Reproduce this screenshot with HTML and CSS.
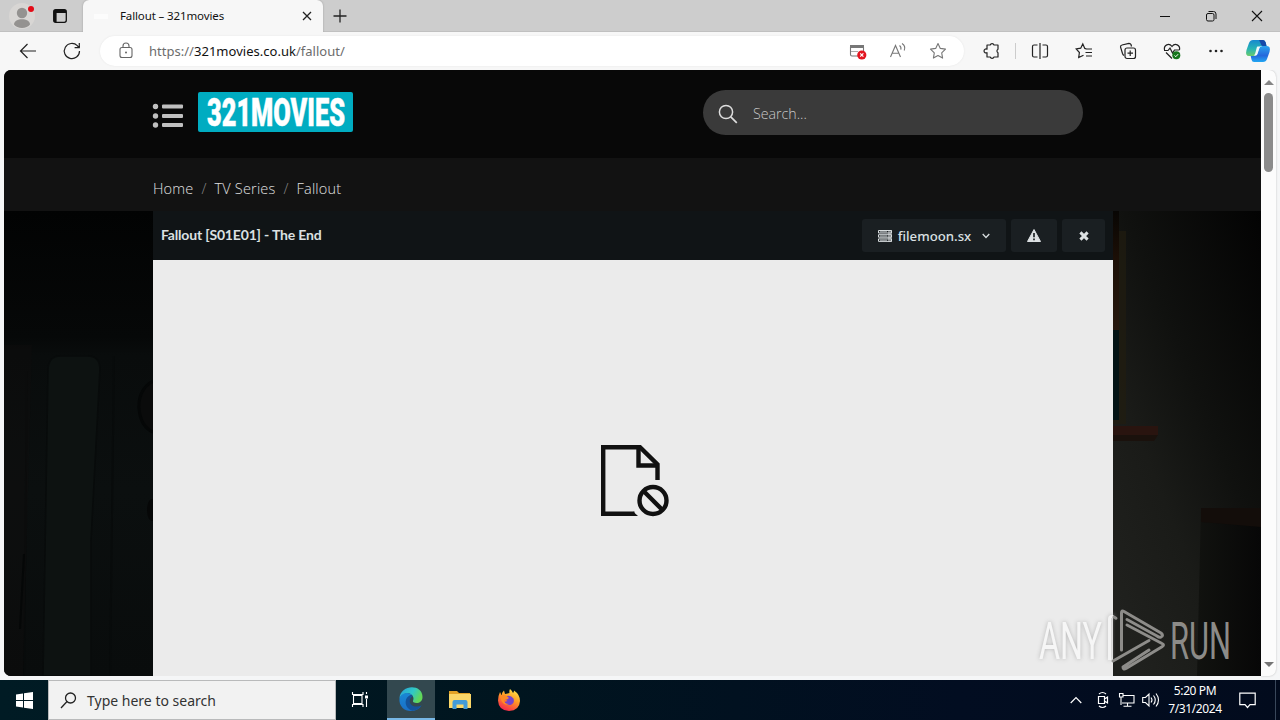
FILE: index.html
```html
<!DOCTYPE html>
<html lang="en">
<head>
<meta charset="utf-8">
<title>Fallout – 321movies</title>
<link rel="stylesheet" href="styles.css">
</head>
<body>
<div class="desktop">
  <div class="tabstrip">
    <div class="tab-tools">
      <svg class="avatar" width="28" height="28" viewBox="0 0 28 28"><circle cx="14" cy="14" r="13" fill="#d8d6d4"/><circle cx="14" cy="11" r="5.2" fill="#949290"/><path d="M6 22.500c0-7 16-7 16 0c-3 4.500-13 4.500-16 0z" fill="#949290"/><circle cx="23" cy="7" r="3" fill="#e30b17"/></svg>
      <svg class="ws" width="16" height="16" viewBox="0 0 16 16"><rect x="1.700" y="1.700" width="12.600" height="12.600" rx="2" fill="none" stroke="#111" stroke-width="1.300"/><path d="M2 2h12v3H2zM2 5h2.600v9H2z" fill="#111"/></svg>
    </div>
    <div class="tab">
      <span class="favicon"></span>
      <span class="tab-title">Fallout – 321movies</span>
      <svg width="12" height="12" viewBox="0 0 12 12"><path d="M2 2l8 8M10 2l-8 8" stroke="#222" stroke-width="1.300"/></svg>
    </div>
    <svg class="plus" width="16" height="16" viewBox="0 0 16 16"><path d="M8 1.500v13M1.500 8h13" stroke="#222" stroke-width="1.300"/></svg>
    <div class="winbtns">
      <svg width="12" height="12" viewBox="0 0 12 12"><path d="M1 6.500h10" stroke="#111"/></svg>
      <svg width="12" height="12" viewBox="0 0 12 12"><rect x="1.500" y="3.500" width="7.500" height="7.500" rx="1.500" fill="none" stroke="#111"/><path d="M3.500 1.500h5q2.500 0 2.500 2.500v5" fill="none" stroke="#111"/></svg>
      <svg width="12" height="12" viewBox="0 0 12 12"><path d="M1 1l10 10M11 1L1 11" stroke="#111" stroke-width="1.100"/></svg>
    </div>
  </div>

  <div class="toolbar">
    <svg class="back" width="18" height="18" viewBox="0 0 18 18"><path d="M17 9H1.500M8.500 2L1.500 9l7 7" fill="none" stroke="#222" stroke-width="1.200"/></svg>
    <svg class="reload" width="18" height="18" viewBox="0 0 18 18"><path d="M16.500 9a7.600 7.600 0 1 1-2.200-5.300L16 5.500M16.300 1v4.700h-4.700" fill="none" stroke="#222" stroke-width="1.200"/></svg>
    <div class="omnibox">
      <svg width="14" height="18" viewBox="0 0 14 18"><rect x="1" y="5.500" width="12" height="10" rx="2" fill="none" stroke="#666" stroke-width="1.100"/><path d="M4 5.500V4a3 3 0 0 1 6 0v1.500" fill="none" stroke="#666" stroke-width="1.100"/><circle cx="7" cy="10.500" r="1" fill="#666"/></svg>
      <div class="url">https://<b>321movies.co.uk</b>/fallout/</div>
      <svg class="block" width="18" height="18" viewBox="0 0 18 18"><rect x="1.500" y="3.500" width="13" height="10.500" rx="1.500" fill="none" stroke="#777" stroke-width="1.100"/><path d="M1 3h14v3H1z" fill="#777"/><path d="M2 9.500h7" stroke="#aaa"/><circle cx="12.800" cy="13" r="4.600" fill="#e3141f"/><path d="M11.200 11.400l3.200 3.200M14.400 11.400l-3.200 3.200" stroke="#fff" stroke-width="1.200"/></svg>
      <svg class="read" width="18" height="18" viewBox="0 0 18 18"><path d="M1.500 15L6.500 3.500L11.500 15M3.200 11.200h6.600M10.500 3.500q2 1.500 1.300 4.200M13 1.500q4 2.500 2.200 7" fill="none" stroke="#777" stroke-width="1.100"/></svg>
      <svg class="fav" width="18" height="18" viewBox="0 0 18 18"><path d="M9 1.500l2.300 4.900 5.200.7-3.800 3.700.9 5.300L9 13.600l-4.600 2.500.9-5.300L1.500 7.100l5.200-.7z" fill="none" stroke="#777" stroke-width="1.100" stroke-linejoin="round"/></svg>
    </div>
    <div class="actions">
      <svg width="18" height="18" viewBox="0 0 18 18"><path d="M4 3h3.200a2 2 0 0 1 3.800 0h4v4.300a1.900 1.900 0 0 0 0 3.400V15h-4a2 2 0 0 1-3.800 0H4v-4.300a2 2 0 1 1 0-3.500z" fill="none" stroke="#222" stroke-width="1.200" stroke-linejoin="round"/></svg>
      <i class="sep"></i>
      <svg width="18" height="18" viewBox="0 0 18 18"><path d="M6.500 3H3q-1.500 0-1.500 1.500v9Q1.500 15 3 15h3.500M11.500 3H15q1.500 0 1.500 1.500v9q0 1.500-1.500 1.500h-3.500M9 1v16" fill="none" stroke="#222" stroke-width="1.200"/></svg>
      <svg width="18" height="18" viewBox="0 0 18 18"><path d="M11.500 7L9.800 6.400 7.800 2 5.700 6.200 1.200 7l3.200 3.500-.7 5 4.800-2.300M11 7h6M10.500 10.500H17M11 14h6" fill="none" stroke="#222" stroke-width="1.200"/></svg>
      <svg width="18" height="18" viewBox="0 0 18 18"><rect x="6" y="6" width="10.500" height="10.500" rx="2" fill="none" stroke="#222" stroke-width="1.200"/><path d="M11.200 8.500v5.500M8.500 11.200H14M5 13.500q-1-.5-1.500-2L1.500 5q0-1.800 1.500-2l7-1.700q1.500 0 2 1.200L12.500 4.500" fill="none" stroke="#222" stroke-width="1.200"/></svg>
      <svg width="18" height="18" viewBox="0 0 18 18"><path d="M1.500 8C.5 3 6 .5 9 4.500C12 .5 17.500 3 16.500 8M3 10.500l6 6M1 8.500h4L7 6l2.500 5 2-3h5" fill="none" stroke="#222" stroke-width="1.200"/><circle cx="13.300" cy="13.300" r="4" fill="#16761c"/><path d="M11.500 13.500l1.300 1.200 2.300-2.500" fill="none" stroke="#fff"/></svg>
      <svg width="18" height="18" viewBox="0 0 18 18"><g fill="#222"><circle cx="3.500" cy="9" r="1.300"/><circle cx="9" cy="9" r="1.300"/><circle cx="14.500" cy="9" r="1.300"/></g></svg>
      <svg class="copilot" width="26" height="26" viewBox="0 0 26 26"><defs><linearGradient id="c1" x1="0" y1="0" x2="0" y2="1"><stop offset="0" stop-color="#1788cf"/><stop offset=".55" stop-color="#27b4b5"/><stop offset="1" stop-color="#6acb6b"/></linearGradient><linearGradient id="c2" x1="0" y1="0" x2="0" y2="1"><stop offset="0" stop-color="#2ba3ee"/><stop offset=".6" stop-color="#2468dc"/><stop offset="1" stop-color="#22a7f2"/></linearGradient></defs><path d="M8 2h10q2 0 2.700 2.500L21.500 8h-5q-2 0-2.700 2.500L12 16q-.8 2-3 2H4Q0 18 1.500 12L4 5Q5.200 2 8 2z" fill="url(#c1)"/><path d="M17.500 8H22q4 0 2.500 6L22 21q-1 3-4 3H9q-2 0-2.500-2.500L5.700 18H9q2.200 0 3-2l2-5.500q.8-2.500 3.500-2.500z" fill="url(#c2)"/><path d="M14 2h4q2 0 2.700 2.500L21.500 8h-4q-1.500-.5-2-3z" fill="#174aa9"/><path d="M12.500 8.500h3.500q-1 0-1.700 2L12.500 16q-.6 1.500-2 1.500H8.500q1.200-.3 1.700-2l1.300-5q.4-2 1-2z" fill="#f1f9fb"/></svg>
    </div>
  </div>

  <div class="window">
    <div class="page">
      <header class="site-head">
        <svg class="menu" width="32" height="26" viewBox="0 0 32 26"><g fill="#bfbfbf"><circle cx="3.500" cy="3.500" r="2.700"/><circle cx="3.500" cy="13" r="2.700"/><circle cx="3.500" cy="22" r="2.700"/><rect x="10" y="1.500" width="21" height="4" rx="1"/><rect x="10" y="11" width="21" height="4" rx="1"/><rect x="10" y="20" width="21" height="4" rx="1"/></g></svg>
        <div class="logo"><svg width="155" height="40" viewBox="0 0 155 40"><text class="logo-text" x="9" y="34" textLength="138" lengthAdjust="spacingAndGlyphs">321MOVIES</text></svg></div>
        <div class="search">
          <svg width="20" height="20" viewBox="0 0 20 20"><circle cx="8" cy="8" r="6.600" fill="none" stroke="#ddd" stroke-width="1.500"/><path d="M12.800 12.800l6 6" stroke="#ddd" stroke-width="1.700"/></svg>
          <span>Search...</span>
        </div>
      </header>
      <nav class="crumbs"><a>Home</a><i>/</i><a>TV Series</a><i>/</i><a>Fallout</a></nav>
      <main class="stage">
        <svg class="scene" width="149" height="465" viewBox="0 0 149 465"><defs><linearGradient id="l1" x1="0" y1="0" x2="0" y2="1"><stop offset="0" stop-color="#020303"/><stop offset=".27" stop-color="#060808"/><stop offset=".31" stop-color="#090c0c"/><stop offset=".6" stop-color="#0b0f0f"/><stop offset="1" stop-color="#090c0c"/></linearGradient></defs><path fill="url(#l1)" d="M0 0h149v465H0z"/><path d="M39 465l5-307q1-13 12-13h28q11 0 12 12l-9 173v135z" fill="#0d1211" stroke="#080b0b" stroke-width="1.500"/><path d="M110 145l-4 320M23 160l-3 305" fill="none" stroke="#080b0b" stroke-width="2"/><path d="M0 134h28l-9 331H0z" fill="#100d0e" opacity=".35"/><path d="M149 170q-15 8-14 28 2 18 14 23" fill="#0a0b0b" stroke="#050707" stroke-width="3"/><ellipse cx="148" cy="299" rx="5" ry="11" fill="#060707"/><path d="M20 343l-4 75" stroke="#050707" stroke-width="2"/></svg>
        <section class="player">
          <div class="player-head">
            <h1>Fallout [S01E01] - The End</h1>
            <div class="btn server"><svg width="14" height="12" viewBox="0 0 14 12"><path d="M.5.500h13v2.500H.5zM.5 4.700h13v2.500H.5zM.5 8.900h13v2.500H.5z" fill="none" stroke="#d7dcde"/><path d="M2 1.800h7M2 6h7M2 10.200h7" stroke="#d7dcde" stroke-width=".8"/><path d="M10 0h4v12h-4z" fill="#d7dcde" opacity=".5"/></svg><span>filemoon.sx</span><svg width="8" height="6" viewBox="0 0 8 6"><path d="M.7 1L4 4.500 7.300 1" fill="none" stroke="#d7dcde" stroke-width="1.300"/></svg></div>
            <div class="btn warn"><svg width="14" height="13" viewBox="0 0 14 13"><path d="M7 .5L13.500 12.500H.5z" fill="#dce0e2" stroke="#dce0e2" stroke-linejoin="round"/><path d="M7 4v4.200M7 9.500v1.700" stroke="#1c2124" stroke-width="1.700"/></svg></div>
            <div class="btn close"><svg width="10" height="10" viewBox="0 0 10 10"><path d="M1.400 1.400l7.200 7.200M8.600 1.400L1.400 8.600" stroke="#dce0e2" stroke-width="3"/></svg></div>
          </div>
          <div class="blocked"><svg width="70" height="74" viewBox="0 0 70 74"><path d="M57.500 36V20.500L40 3.200H3.200v66.600h31.300" fill="none" stroke="#111" stroke-width="4.400"/><path d="M38.500 3v18.500H58" fill="none" stroke="#111" stroke-width="4.400"/><path d="M33 67.600l5 4.400h-5z" fill="#111"/><circle cx="53" cy="56.500" r="13.500" fill="none" stroke="#111" stroke-width="4.400"/><path d="M43.500 47l19 19" stroke="#111" stroke-width="4.400"/></svg></div>
        </section>
        <svg class="scene" width="148" height="465" viewBox="0 0 148 465"><defs><linearGradient id="r1" x1="1" y1="0" x2=".2" y2="1"><stop offset="0" stop-color="#030303"/><stop offset=".45" stop-color="#10110f"/><stop offset=".7" stop-color="#1a1b18"/><stop offset="1" stop-color="#20211e"/></linearGradient><linearGradient id="r2" x1="0" y1="0" x2="1" y2="0"><stop offset="0" stop-color="#11120f"/><stop offset="1" stop-color="#070707"/></linearGradient><linearGradient id="r3" x1="0" y1="0" x2="0" y2="1"><stop offset="0" stop-color="#080604"/><stop offset=".4" stop-color="#1c0f06"/><stop offset="1" stop-color="#26180e"/></linearGradient></defs><path fill="url(#r1)" d="M0 0h148v465H0z"/><path d="M0 0h6v120H0z" fill="url(#r3)"/><path d="M0 119h6v90H0z" fill="#031314"/><path d="M6 20h7v193H0v-4h6z" fill="#211c10" opacity=".7"/><path d="M0 215h45v9H0z" fill="#29140f"/><path d="M0 224h45l-4 6H0z" fill="#1a110c"/><path d="M88 297h60v168H84z" fill="url(#r2)"/><path d="M88 297h60v19l-60-5z" fill="#130d0a"/></svg>
      </main>
    </div>
    <div class="scroll"><i class="up"></i><i class="thumb"></i><i class="down"></i></div>
  </div>

  <div class="taskbar">
    <div class="start"><svg width="17" height="17" viewBox="0 0 17 17"><path d="M0 2.500l7-1v6.500H0zM8 1.300L17 0v8H8zM0 9h7v6.500l-7-1zM8 9h9v8l-9-1.300z" fill="#fff"/></svg></div>
    <div class="tsearch"><svg width="17" height="17" viewBox="0 0 17 17"><circle cx="10.500" cy="6" r="5" fill="none" stroke="#222" stroke-width="1.300"/><path d="M7 9.500L1 16" stroke="#222" stroke-width="1.300"/></svg><span>Type here to search</span></div>
    <div class="tapp"><svg width="18" height="18" viewBox="0 0 18 18"><path d="M2.500 4.500h8.500v8H2.500zM1.500 1v2.500h10.500V1M1.500 16v-2.500h10.500V16M15.500 1v2M15.500 8v8" fill="none" stroke="#fff" stroke-width="1.100"/><path d="M14 4.500h3v3h-3z" fill="#fff"/></svg></div>
    <div class="tapp active"><svg width="24" height="24" viewBox="0 0 24 24"><defs><linearGradient id="e1" x1="0" y1="0" x2="1" y2=".4"><stop offset="0" stop-color="#279fd9"/><stop offset=".6" stop-color="#30c8c7"/><stop offset="1" stop-color="#62d757"/></linearGradient><linearGradient id="e2" x1="0" y1="0" x2="0" y2="1"><stop offset="0" stop-color="#1988d5"/><stop offset="1" stop-color="#1a6fc6"/></linearGradient></defs><path d="M.5 11C2-3 23.500-3 23.500 10c0 6-6 7-9 5.200-1.200-.8 0-1.700 0-3.700C14 5 5 4 .5 11z" fill="url(#e1)"/><path d="M.5 11C3 5 10 4.700 13 8c-5 0-7 9 0 12 4 1.700 8 0 9.500-1.500C16 28-1 25 .5 11z" fill="url(#e2)"/><path d="M13 8c-8 .5-9 13 .5 15.800 4-.3 7.500-2.800 9-5.300-7 3-13-.5-11.500-6 .4-1.700 1.500-2.500 2.700-2.800z" fill="#14539a"/></svg></div>
    <div class="tapp"><svg width="22" height="20" viewBox="0 0 22 20"><path d="M0 1h8l2 2h11v5H0z" fill="#e3a326"/><path d="M0 4h22v14H0z" fill="#fbd768"/><path d="M3.500 19v-7q0-2 2-2h11q2 0 2 2v7h-4v-4.500h-7V19z" fill="#429bd8"/></svg></div>
    <div class="tapp"><svg width="24" height="24" viewBox="0 0 24 24"><defs><linearGradient id="f1" x1=".8" y1="0" x2=".3" y2="1"><stop offset="0" stop-color="#ffe94a"/><stop offset=".45" stop-color="#ff9a25"/><stop offset="1" stop-color="#f5234f"/></linearGradient></defs><path d="M13 1q2 1.500 3 4 1-1 1-2.500Q23 6.500 23 13q-.5 9.500-11 10Q1.500 22.500 1 12.500 1 8 3 4l1.500 3Q5 4 7 2.500L8 6q3-.5 4.500-1Q12 3 13 1z" fill="url(#f1)"/><path d="M8 9q5-3 8.500 1.500 1.500 5-3 6.500-5 .5-6-3l3-1-3-2z" fill="#7445cc"/><path d="M3 8q5-3 9 2-1.500 2-5 2 0 4 5 4Q5 19 3 8z" fill="#ff8b24"/></svg></div>
    <div class="tray">
      <svg class="chev" width="12" height="8" viewBox="0 0 12 8"><path d="M.7 7L6 1.500 11.300 7" fill="none" stroke="#fff" stroke-width="1.200"/></svg>
      <svg class="meet" width="14" height="18" viewBox="0 0 14 18"><path d="M2.500 5.500h6v7h-6zM8.500 8l3-2v6l-3-2M3 3q3.500-3 7 0M3 15q3.500 3 7 0" fill="none" stroke="#fff" stroke-width="1.200"/></svg>
      <svg class="net" width="17" height="16" viewBox="0 0 17 16"><path d="M5 3.500h11v7.500H4M9.500 11v3M5.500 14.200h8M1.500 1.500h3.500v3.500H1.500zM3 5v8" fill="none" stroke="#fff" stroke-width="1.100"/></svg>
      <svg class="vol" width="17" height="16" viewBox="0 0 17 16"><path d="M.7 5.500h2.800L7 2v12l-3.500-3.500H.7zM9 5.500q2 2.500 0 5M11.500 3.500q3.500 4.500 0 9M14 1.500q5 6.500 0 13" fill="none" stroke="#fff" stroke-width="1.100"/></svg>
      <div class="clock"><span class="time">5:20 PM</span><span class="date">7/31/2024</span></div>
      <svg class="note" width="17" height="17" viewBox="0 0 17 17"><path d="M.8 1.200h15.400v11.500H11L8.500 15.500 6 12.700H.8z" fill="none" stroke="#fff" stroke-width="1.200"/></svg>
      <i class="peek"></i>
    </div>
  </div>

  <svg class="watermark" width="204" height="72" viewBox="0 0 204 72"><g class="wm-any"><text x="4" y="53" textLength="63" lengthAdjust="spacingAndGlyphs">ANY</text><path d="M74.500 54V13q0-3 3-2.500l.5 1" fill="none" stroke="#f3f3f3" stroke-width="3"/></g><g class="wm-run"><text x="135" y="53" textLength="61" lengthAdjust="spacingAndGlyphs">RUN</text></g><g class="wm-mark"><path d="M86.500 44V7q0-3 2.500-1.500L126 27q3 2.500 0 4-1.500 1-4-1L92 13.500"/><path d="M92 19l35 18.500q3 1.500 0 3.200L91 62.500q-3 1.500-3-1.500l26-17"/><path d="M78 55l36-20.500M79 11l2 1.200"/></g></svg>
</div>
</body>
</html>
```
FILE: styles.css
```css
* { box-sizing: border-box; }
body { margin: 0; font-family: "Noto Sans", "Open Sans", sans-serif; }
svg { display: block; flex: none; overflow: visible; }
.desktop { position: relative; width: 1280px; height: 720px; overflow: hidden; background: #f5f6f7; display: flex; flex-direction: column; }

.tabstrip { height: 32px; flex: none; display: flex; align-items: center; background: #cdcdcd; border-bottom: 1px solid #c0c0c0; }
.tab-tools { width: 83px; height: 32px; display: flex; align-items: center; padding-left: 8px; gap: 16px; border-bottom-right-radius: 6px; }
.tab { width: 240px; height: 32px; align-self: flex-start; background: #f7f7f7; border-radius: 6px 6px 0 0; display: flex; align-items: center; padding: 0 10px 0 11px; box-shadow: 0 0 2px #999; clip-path: inset(0 -3px 0 -3px); }
.favicon { width: 14px; height: 5px; background: #fcfcfc; margin-right: 12px; }
.tab-title { font-size: 11.500px; letter-spacing: -.12px; color: #111; flex: 1; white-space: nowrap; margin-top: -1px; }
.plus { margin-left: 9px; }
.winbtns { margin-left: auto; display: flex; gap: 34px; padding-right: 17px; }

.toolbar { height: 38px; flex: none; display: flex; align-items: center; background: #f7f7f7; }
.back { margin-left: 19px; }
.reload { margin-left: 26px; }
.omnibox { margin-left: 19px; width: 864px; height: 30px; border-radius: 15px; background: #fff; display: flex; align-items: center; padding: 0 17px 0 19px; box-shadow: 0 0 2px #e4e4e4; }
.url { margin-left: 16px; flex: 1; font-size: 13px; letter-spacing: .02px; color: #6c6c6c; white-space: nowrap; }
.url b { font-weight: 400; color: #111; }
.read { margin-left: 22px; }
.fav { margin-left: 22px; }
.actions { display: flex; align-items: center; gap: 26px; margin-left: 19px; }
.sep { width: 1px; height: 16px; background: #ccc; margin: 0 -11px 0 -12px; }
.copilot { margin-left: -6px; }

.window { height: 610px; flex: none; display: flex; padding-left: 4px; background: #f5f6f7; }
.page { width: 1257px; height: 606px; border-radius: 7px 0 0 7px; overflow: hidden; display: flex; flex-direction: column; background: #080808; }
.scroll { width: 15px; height: 606px; background: #fcfcfc; border-radius: 0 7px 7px 0; display: flex; flex-direction: column; align-items: center; box-shadow: 0 0 2px #bbb; clip-path: inset(0 -3px -3px 0); }
.up, .down { width: 0; height: 0; border: 5px solid transparent; }
.up { margin-top: 5px; border-bottom: 5px solid #858585; }
.thumb { width: 9px; height: 79px; margin-top: 8px; background: #8b8b8b; border-radius: 5px; }
.down { margin-top: auto; margin-bottom: 4px; border-top: 5px solid #757575; }

.site-head { height: 88px; flex: none; display: flex; padding: 20px 0 0 148px; background: #080808; }
.menu { margin-top: 13px; }
.logo { margin: 2px 0 0 14px; width: 155px; height: 40px; background: #00acc1; border-radius: 2px; }
.logo-text { font-family: "Roboto", "Liberation Sans", sans-serif; font-weight: 900; font-size: 38px; fill: #fff; stroke: #fff; stroke-width: .5px; }
.search { margin-left: 350px; width: 380px; height: 45px; border-radius: 23px; background: #3a3a3a; display: flex; align-items: center; padding: 2px 0 0 15px; gap: 15px; color: #c8c8c8; }
.search span { font-family: "Open Sans", sans-serif; font-weight: 300; font-size: 14.200px; }
.crumbs { height: 53px; flex: none; background: #121212; display: flex; align-items: center; padding: 8px 0 0 149px; gap: 8px; font-family: "Open Sans", sans-serif; font-weight: 300; font-size: 14.500px; letter-spacing: .18px; color: #e0e0e0; }
.crumbs i { font-style: normal; color: #888; }
.stage { display: flex; height: 465px; flex: none; }
.scene { overflow: hidden; }
.player { width: 960px; display: flex; flex-direction: column; }
.player-head { height: 49px; flex: none; background: #101416; display: flex; align-items: center; padding: 0 8px; gap: 5px; color: #dbe0e2; }
.player-head h1 { flex: 1; margin: -2px 0 0; font-family: "Lato", sans-serif; font-weight: 700; font-size: 14px; letter-spacing: -.17px; }
.btn { height: 33px; background: #1a1f22; border-radius: 3px; display: flex; align-items: center; justify-content: center; }
.server { width: 144px; gap: 6px; font-size: 13.200px; }
.server span { font-weight: 500; margin-right: 5px; }
.warn { width: 46px; }
.close { width: 43px; }
.blocked { flex: 1; background: #ebebeb; padding: 184px 0 0 447px; }

.taskbar { height: 40px; flex: none; display: flex; background: linear-gradient(90deg, #001b24 0%, #00151f 40%, #020d21 75%, #020b1d 100%); color: #fff; }
.start { width: 48px; display: flex; align-items: center; justify-content: center; }
.tsearch { width: 288px; background: #f2f2f2; border: 1px solid #b9babb; display: flex; align-items: center; padding-left: 11px; gap: 10px; color: #333; font-size: 14px; }
.tapp { width: 49px; display: flex; align-items: center; justify-content: center; }
.tsearch + .tapp { width: 51px; padding-right: 3px; }
.tapp.active { width: 48px; background: #33484f; border-bottom: 2px solid #78b8e6; }
.tray { margin-left: auto; display: flex; align-items: center; }
.chev { margin-right: 1px; }
.meet { margin-left: 13px; }
.net { margin-left: 8px; }
.vol { margin-left: 7px; }
.clock { width: 72px; display: flex; flex-direction: column; align-items: center; font-size: 12px; line-height: 18px; letter-spacing: -.4px; }
.note { margin-left: 8px; }
.peek { width: 1px; height: 40px; background: #39475a; margin-left: 19px; margin-right: 4px; }

.watermark { position: absolute; left: 1035px; top: 606px; }
.watermark text { font-family: "Roboto", "Liberation Sans", sans-serif; font-weight: 400; font-size: 51px; }
.wm-any { fill: #f6f6f6; filter: drop-shadow(0 0 2px #b4b4b4); }
.wm-run { fill: #8c8b88; }
.wm-mark { fill: none; stroke: #8d8c89; stroke-width: 3px; stroke-linecap: round; stroke-linejoin: round; }
```
